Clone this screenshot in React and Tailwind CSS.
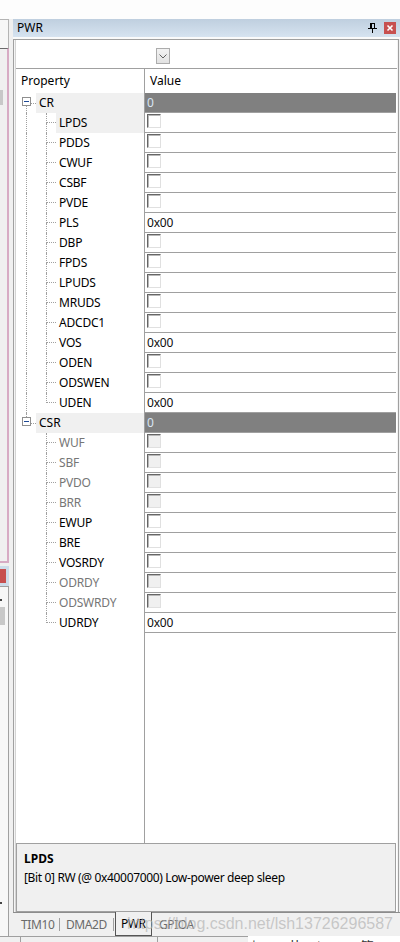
import React from 'react';

const CR_ITEMS = [
  { n: 'LPDS', t: 'cb', sel: true },
  { n: 'PDDS', t: 'cb' },
  { n: 'CWUF', t: 'cb' },
  { n: 'CSBF', t: 'cb' },
  { n: 'PVDE', t: 'cb' },
  { n: 'PLS', t: 'hex' },
  { n: 'DBP', t: 'cb' },
  { n: 'FPDS', t: 'cb' },
  { n: 'LPUDS', t: 'cb' },
  { n: 'MRUDS', t: 'cb' },
  { n: 'ADCDC1', t: 'cb' },
  { n: 'VOS', t: 'hex' },
  { n: 'ODEN', t: 'cb' },
  { n: 'ODSWEN', t: 'cb' },
  { n: 'UDEN', t: 'hex' },
];

const CSR_ITEMS = [
  { n: 'WUF', t: 'cb', dis: true },
  { n: 'SBF', t: 'cb', dis: true },
  { n: 'PVDO', t: 'cb', dis: true },
  { n: 'BRR', t: 'cb', dis: true },
  { n: 'EWUP', t: 'cb' },
  { n: 'BRE', t: 'cb' },
  { n: 'VOSRDY', t: 'cb' },
  { n: 'ODRDY', t: 'cb', dis: true },
  { n: 'ODSWRDY', t: 'cb', dis: true },
  { n: 'UDRDY', t: 'hex' },
];

function Check({ dis }) {
  return (
    <div
      className={`w-[14px] h-[14px] border border-t-[#666] border-l-[#666] border-r-[#e0e0e0] border-b-[#e0e0e0] shadow-[inset_1px_1px_0_#b8b8b8] ${
        dis ? 'bg-[#f0f0f0]' : 'bg-white'
      }`}
    />
  );
}

function CategoryRow({ name, lineAbove, lineBelow }) {
  return (
    <div className="flex h-[20px]">
      <div className="w-[128px] flex h-full">
        <div className="w-[6px]" />
        <div className="w-[9px] h-full flex flex-col items-center">
          <div className={`h-[4px] w-0 ${lineAbove ? 'border-l border-dotted border-[#a0a0a0]' : ''}`} />
          <div className="w-[9px] h-[9px] border border-[#8f8f8f] bg-white flex items-center justify-center">
            <div className="w-[5px] h-[1px] bg-[#1f4a96]" />
          </div>
          <div className={`flex-1 w-0 ${lineBelow ? 'border-l border-dotted border-[#a0a0a0]' : ''}`} />
        </div>
        <div className="w-[5px] h-full flex items-center">
          <div className="w-full h-0 border-t border-dotted border-[#a0a0a0]" />
        </div>
        <div className="flex-1 h-full bg-[#f0f0f0] pl-[3px] flex items-center text-[12px] leading-[16px] text-black">
          {name}
        </div>
      </div>
      <div className="flex-1 h-full border-l border-[#a0a0a0] flex">
        <div className="flex-1 mr-[1px] border-b border-[#a0a0a0] bg-[#808080] pl-[2px] flex items-center text-[12px] leading-[16px] text-[#d8e6f4]">
          0
        </div>
      </div>
    </div>
  );
}

function ChildRow({ item, last, parentLine }) {
  return (
    <div className="flex h-[20px]">
      <div className="w-[128px] flex h-full">
        <div className="w-[10px]" />
        <div className={`w-[20px] h-full ${parentLine ? 'border-l border-dotted border-[#a0a0a0]' : ''}`} />
        <div className="w-[10px] h-full flex flex-col">
          <div className="h-[10px] border-l border-b border-dotted border-[#a0a0a0]" />
          <div className={`flex-1 ${last ? '' : 'border-l border-dotted border-[#a0a0a0]'}`} />
        </div>
        <div
          className={`flex-1 h-full pl-[3px] flex items-center text-[12px] leading-[16px] tracking-[-0.2px] ${
            item.sel ? 'bg-[#f0f0f0]' : ''
          } ${item.dis ? 'text-[#767676]' : 'text-black'}`}
        >
          {item.n}
        </div>
      </div>
      <div className="flex-1 h-full border-l border-[#a0a0a0] flex">
        {item.t === 'cb' ? (
          <div className="flex-1 mr-[1px] border-b border-[#a0a0a0] pl-[2px] pt-[1px] flex items-start">
            <Check dis={item.dis} />
          </div>
        ) : (
          <div className="flex-1 mr-[1px] border-b border-[#a0a0a0] pl-[2px] flex items-center text-[12px] leading-[16px] tracking-[-0.2px] text-[#101010]">
            0x00
          </div>
        )}
      </div>
    </div>
  );
}

function LeftStrip() {
  return (
    <div className="w-[13px] flex flex-col">
      <div className="h-[29px] w-[9px] border-t border-r border-[#b4b4b4] bg-[#f7f7f7]" />
      <div className="h-[515px] w-[9px] border-t border-t-[#6b6b6b] border-r-2 border-r-[#d7abc4] border-b-2 border-b-[#d7abc4] bg-[#f0f0f0] pt-[41px]">
        <div className="w-[3px] h-[15px] bg-[#c8c8c8]" />
      </div>
      <div className="h-[3px]" />
      <div className="h-[20px] w-[9px] bg-[#cddcea] pt-[3px]">
        <div className="w-[6px] h-[14px] bg-[#c75050]" />
      </div>
      <div className="flex-1 w-[9px] border-t border-r border-[#a0a0a0] bg-[#f7f7f7] flex flex-col">
        <div className="mt-[12px] w-[2px] h-[2px] bg-[#444]" />
        <div className="mt-[6px] w-[5px] h-[18px] bg-[#c8c8c8]" />
        <div className="flex-1" />
        <div className="mb-[32px] w-[2px] h-[2px] bg-[#444]" />
      </div>
    </div>
  );
}

function Tabs() {
  return (
    <div className="h-[24px] flex text-[12px] leading-[16px] tracking-[-0.4px]">
      <div className="w-[2px] border-t border-[#8c8c8c]" />
      <div className="w-[44px] border-t border-[#8c8c8c] pl-[6px] flex items-center text-[#6a6a6a]">TIM10</div>
      <div className="w-[1px] border-t border-[#8c8c8c] pt-[5px]">
        <div className="w-[1px] h-[13px] bg-[#a0a0a0]" />
      </div>
      <div className="w-[53px] border-t border-[#8c8c8c] pl-[6px] flex items-center text-[#6a6a6a]">DMA2D</div>
      <div className="w-[1px] border-t border-[#8c8c8c] pt-[5px]">
        <div className="w-[1px] h-[13px] bg-[#a0a0a0]" />
      </div>
      <div className="w-[1px] border-t border-[#8c8c8c]" />
      <div className="w-[37px] border-l border-r border-b border-[#555] pl-[5px] flex items-center text-black">PWR</div>
      <div className="flex-1 border-t border-[#8c8c8c] pl-[7px] flex items-center text-[#6a6a6a]">GPIOA</div>
    </div>
  );
}

export default function App() {
  return (
    <div className="relative w-[400px] h-[942px] overflow-hidden bg-[#f0f0f0] font-['Noto_Sans',sans-serif] text-black">
      <div className="h-[19px] bg-[#fdfdfd]" />
      <div className="h-[917px] flex">
        <LeftStrip />
        <div className="flex-1 flex flex-col">
          <div className="h-[18px] bg-linear-to-b from-[#bfcfdf] to-[#d6e3f0] flex items-center pl-[4px] pr-[4px]">
            <span className="text-[12px] leading-[16px]">PWR</span>
            <div className="flex-1" />
            <svg width="9" height="10" viewBox="0 0 9 10" shapeRendering="crispEdges">
              <path d="M2 0h5v1h-5z M2 1h2v4h-2z M6 1h1v4h-1z M0 5h9v1h-9z M4 6h1v4h-1z" fill="#000" />
            </svg>
            <div className="w-[7px]" />
            <div className="w-[12px] h-[12px] bg-[#c75050] flex items-center justify-center">
              <svg width="12" height="12" viewBox="0 0 12 12">
                <path d="M3.5 3.5 L8.5 8.5 M8.5 3.5 L3.5 8.5" stroke="#fff" strokeWidth="1.6" />
              </svg>
            </div>
          </div>
          <div className="h-[2px] bg-[#fafafa]" />
          <div className="flex-1 min-h-0 mr-[1px] flex flex-col border-l border-t border-r border-[#a0a0a0] bg-[#f4f4f4]">
            <div className="flex-1 min-h-0 ml-[1px] mr-[1px] flex flex-col border-l border-[#d4d4d4] bg-white">
              <div className="h-[29px] border-b border-[#a0a0a0] pt-[8px] pl-[140px]">
                <div className="w-[14px] h-[16px] border border-[#acacac] bg-linear-to-b from-[#f2f2f2] to-[#e2e2e2] flex items-center justify-center">
                  <svg width="8" height="5" viewBox="0 0 8 5">
                    <path d="M0.5 0.5 L4 4 L7.5 0.5" stroke="#606060" strokeWidth="1" fill="none" />
                  </svg>
                </div>
              </div>
              <div className="h-[24px] flex text-[12px] leading-[16px]">
                <div className="w-[128px] pl-[5px] flex items-center">Property</div>
                <div className="flex-1 border-l border-[#a0a0a0] pl-[5px] flex items-center">Value</div>
              </div>
              <CategoryRow name="CR" lineAbove={false} lineBelow={true} />
              {CR_ITEMS.map((it, i) => (
                <ChildRow key={it.n} item={it} last={i === CR_ITEMS.length - 1} parentLine={true} />
              ))}
              <CategoryRow name="CSR" lineAbove={true} lineBelow={false} />
              {CSR_ITEMS.map((it, i) => (
                <ChildRow key={it.n} item={it} last={i === CSR_ITEMS.length - 1} parentLine={false} />
              ))}
              <div className="flex-1 flex">
                <div className="w-[128px]" />
                <div className="flex-1 border-l border-[#a0a0a0]" />
              </div>
              <div className="h-[69px] mr-[1px] border border-[#a0a0a0] bg-[#f0f0f0] pl-[7px] pt-[6px]">
                <div className="font-bold text-[12px] leading-[18px]">LPDS</div>
                <div className="text-[12px] leading-[20px] tracking-[-0.35px]">[Bit 0] RW (@ 0x40007000) Low-power deep sleep</div>
              </div>
            </div>
          </div>
          <Tabs />
        </div>
      </div>
      <div className="h-[6px] flex">
        <div className="w-[248px] border-t border-[#a0a0a0] bg-[#f0f0f0] flex">
          <div className="w-[20px]" />
          <div className="w-[1px] bg-[#a0a0a0]" />
          <div className="w-[136px]" />
          <div className="w-[1px] bg-[#a0a0a0]" />
        </div>
        <div className="flex-1 bg-white overflow-hidden">
          <div className="pt-[2px] pl-[4px] flex items-start gap-[10px] text-[14px] leading-[16px] text-[#333] font-['Noto_Sans_CJK_SC',sans-serif]">
            <span>|</span>
            <span>⊞</span>
            <span>节</span>
            <span>∧</span>
            <span>•</span>
            <span>第</span>
            <span>∞</span>
          </div>
        </div>
      </div>
      <div className="absolute left-[127px] top-[915px] text-[16px] leading-[18px] text-[#b4b4b4]/70 font-['Liberation_Sans',sans-serif] pointer-events-none whitespace-nowrap">
        https://blog.csdn.net/lsh13726296587
      </div>
    </div>
  );
}
